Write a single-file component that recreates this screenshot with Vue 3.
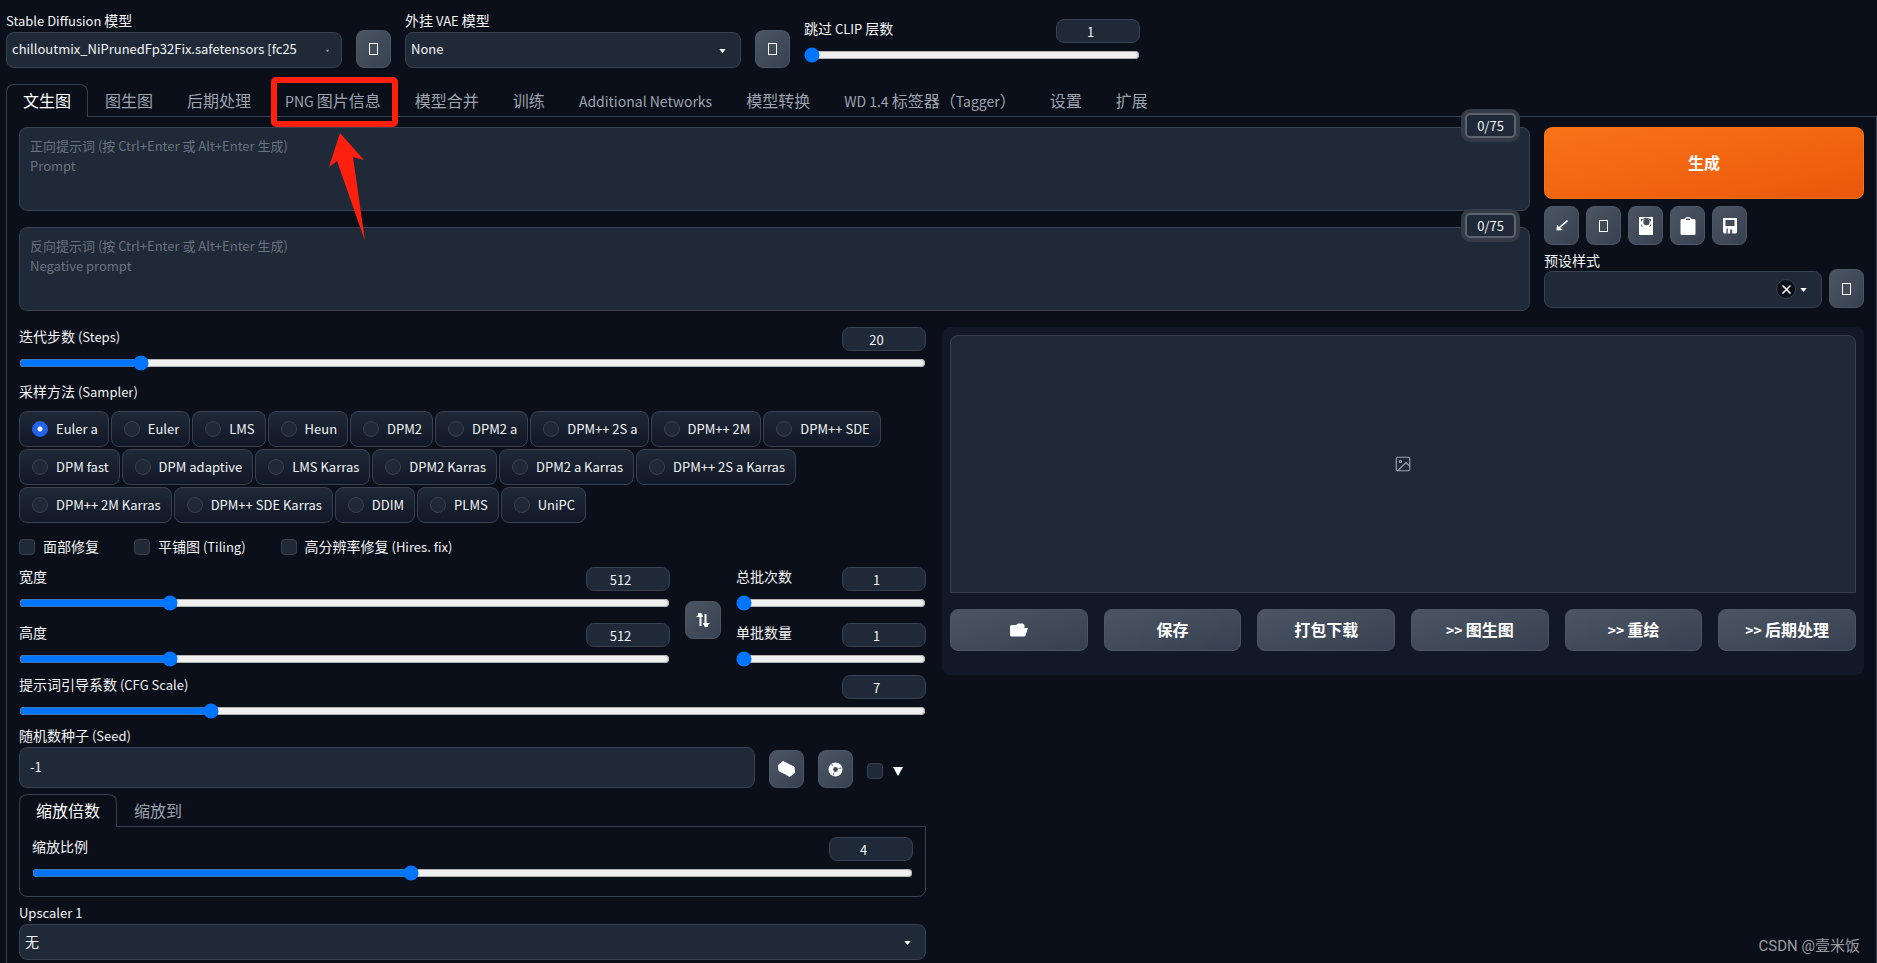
<script setup>
import { h, ref } from 'vue'

// Sets Latin runs a step smaller than the Chinese text beside them.
const Mixed = (props) =>
  props.text.split(/([\x20-\x7e]+)/).filter(Boolean).map((part) =>
    /^[\x20-\x7e]/.test(part) ? h('span', { class: 'latin' }, part) : part)
Mixed.props = ['text']

const tabs = ['文生图', '图生图', '后期处理', 'PNG 图片信息', '模型合并', '训练', 'Additional Networks', '模型转换', 'WD 1.4 标签器（Tagger）', '设置', '扩展']
const activeTab = ref('文生图')
const samplers = ['Euler a', 'Euler', 'LMS', 'Heun', 'DPM2', 'DPM2 a', 'DPM++ 2S a', 'DPM++ 2M', 'DPM++ SDE', 'DPM fast', 'DPM adaptive', 'LMS Karras', 'DPM2 Karras', 'DPM2 a Karras', 'DPM++ 2S a Karras', 'DPM++ 2M Karras', 'DPM++ SDE Karras', 'DDIM', 'PLMS', 'UniPC']
const sampler = ref('Euler a')
const toggles = ['面部修复', '平铺图 (Tiling)', '高分辨率修复 (Hires. fix)']
const prompts = [
  { id: 'prompt', hint: '正向提示词 (按 Ctrl+Enter 或 Alt+Enter 生成)\nPrompt' },
  { id: 'negative', hint: '反向提示词 (按 Ctrl+Enter 或 Alt+Enter 生成)\nNegative prompt' },
]
const clip = ref(1)
const steps = ref(20)
const width = ref(512)
const height = ref(512)
const batchCount = ref(1)
const batchSize = ref(1)
const cfg = ref(7)
const scale = ref(4)
const seed = ref('-1')
const outputs = ['保存', '打包下载', '>> 图生图', '>> 重绘', '>> 后期处理']
</script>

<template>
  <div class="app">
    <header class="topbar">
      <div class="field top-field">
        <label for="model"><Mixed text="Stable Diffusion 模型" /></label>
        <div class="select-box">
          <select id="model" class="latin"><option>chilloutmix_NiPrunedFp32Fix.safetensors [fc2511737a]</option></select>
          <svg class="caret tiny" viewBox="0 0 8 5"><path d="M2 1h4L4 4z" /></svg>
        </div>
      </div>
      <button class="tool" aria-label="refresh"><svg width="9" height="12"><rect class="line" x=".5" y=".5" width="8" height="11" /></svg></button>
      <div class="field top-field">
        <label for="vae"><Mixed text="外挂 VAE 模型" /></label>
        <div class="select-box">
          <select id="vae" class="latin"><option>None</option></select>
          <svg class="caret" viewBox="0 0 8 5"><path d="M0 0h8L4 5z" /></svg>
        </div>
      </div>
      <button class="tool" aria-label="refresh"><svg width="9" height="12"><rect class="line" x=".5" y=".5" width="8" height="11" /></svg></button>
      <div class="slider top-field">
        <div class="slider-head"><label for="clip"><Mixed text="跳过 CLIP 层数" /></label><input v-model="clip" type="number" aria-label="clip"></div>
        <input id="clip" v-model="clip" type="range" min="1" max="12">
      </div>
    </header>

    <nav class="tabs">
      <div v-for="t in tabs" :key="t" class="tab-wrap">
        <button class="tab" :class="{ active: t === activeTab }" @click="activeTab = t"><Mixed :text="t" /></button>
        <template v-if="t === 'PNG 图片信息'">
          <div class="mark"></div>
          <svg class="arrow" width="38" height="110" viewBox="0 0 38 110"><path d="M12 1 36 28 25 25 37 109 9 29 1 35z" fill="#ff1f0f" /></svg>
        </template>
      </div>
    </nav>

    <main class="panel">
      <section class="upper">
        <div class="prompts">
          <div v-for="p in prompts" :key="p.id" class="prompt">
            <textarea :id="p.id" :placeholder="p.hint" :aria-label="p.id"></textarea>
            <span class="counter">0/75</span>
          </div>
        </div>
        <div class="actions">
          <button class="generate">生成</button>
          <div class="tools">
            <button class="tool tall" aria-label="read"><svg width="12" height="11" viewBox="0 0 12 11"><path d="M11.500.5 3 8" stroke="#fff" stroke-width="1.600" /><path d="M1 4.500 .5 10.500 7 10 5 8.500 2.500 6.500z" fill="#fff" /></svg></button>
            <button class="tool tall" aria-label="clear"><svg width="9" height="12"><rect class="line" x=".5" y=".5" width="8" height="11" /></svg></button>
            <button class="tool tall" aria-label="networks"><svg width="14" height="18" viewBox="0 0 14 18"><path d="M0 0h14v18H0z" fill="#fff" /><path d="M2 2h2L2 5zM12 2h-2l2 3zM2 9V7l2 3zM12 9V7l-2 3z" fill="#434c5a" /><circle cx="7.500" cy="5" r="3.200" fill="#434c5a" /><path d="M4 2.500C5 .8 9 .8 11 2.500" stroke="#434c5a" fill="none" /></svg></button>
            <button class="tool tall" aria-label="paste"><svg width="16" height="18" viewBox="0 0 16 18"><path d="M2 2h2.500Q5 0 8 0t3.500 2H14q1.500 0 1.500 1.500v13Q15.500 18 14 18H2Q.5 18 .5 16.500v-13Q.5 2 2 2z" fill="#fff" /><path d="M6 2.300h4" stroke="#434c5a" stroke-width="1.400" /></svg></button>
            <button class="tool tall" aria-label="save"><svg width="16" height="16" viewBox="0 0 16 16"><path d="M1 0h14v14q0 1.500-2 1.500H2L1 14z" fill="#fff" /><path d="M3.500 2h9v6h-9zM4.500 10.500h1.300V16H4.500zM8.200 11.500h2V16h-2z" fill="#434c5a" /></svg></button>
          </div>
          <label class="style-label" for="styles">预设样式</label>
          <div class="style-row">
            <div class="select-box grow">
              <select id="styles" class="style-select"><option></option></select>
              <button class="clear" aria-label="clear styles"><svg width="9" height="9"><path class="line cross" d="M.5.5l8 8M8.500.5l-8 8" /></svg></button>
              <svg class="caret" viewBox="0 0 8 5"><path d="M0 0h8L4 5z" /></svg>
            </div>
            <button class="tool tall" aria-label="refresh"><svg width="9" height="12"><rect class="line" x=".5" y=".5" width="8" height="11" /></svg></button>
          </div>
        </div>
      </section>

      <section class="lower">
        <div class="settings">
          <div class="slider">
            <div class="slider-head"><label for="steps"><Mixed text="迭代步数 (Steps)" /></label><input v-model="steps" type="number" aria-label="steps"></div>
            <input id="steps" v-model="steps" type="range" min="1" max="150">
          </div>

          <fieldset class="samplers">
            <legend><Mixed text="采样方法 (Sampler)" /></legend>
            <div class="chips">
              <label v-for="s in samplers" :key="s" class="chip"><input v-model="sampler" type="radio" name="sampler" :value="s"><span class="latin">{{ s }}</span></label>
            </div>
          </fieldset>

          <div class="toggles">
            <label v-for="t in toggles" :key="t"><input type="checkbox"><span><Mixed :text="t" /></span></label>
          </div>

          <div class="size-row">
            <div class="stack grow">
              <div class="slider">
                <div class="slider-head"><label for="w">宽度</label><input v-model="width" type="number" aria-label="width"></div>
                <input id="w" v-model="width" type="range" min="64" max="2048" step="8">
              </div>
              <div class="slider">
                <div class="slider-head"><label for="h">高度</label><input v-model="height" type="number" aria-label="height"></div>
                <input id="h" v-model="height" type="range" min="64" max="2048" step="8">
              </div>
            </div>
            <button class="tool" aria-label="swap"><svg width="14" height="14" viewBox="0 0 14 14"><path d="M4.500 13V2M9.500 1v11" stroke="#fff" stroke-width="2" /><path d="M2 1h3.500M8.500 13H12" stroke="#fff" stroke-width="2" /><path d="M0 4 4.500 0l2.500 3v1zM14 10l-4.500 4L7 11v-1z" fill="#fff" /></svg></button>
            <div class="stack batch">
              <div class="slider">
                <div class="slider-head"><label for="bc">总批次数</label><input v-model="batchCount" type="number" aria-label="count"></div>
                <input id="bc" v-model="batchCount" type="range" min="1" max="100">
              </div>
              <div class="slider">
                <div class="slider-head"><label for="bs">单批数量</label><input v-model="batchSize" type="number" aria-label="size"></div>
                <input id="bs" v-model="batchSize" type="range" min="1" max="8">
              </div>
            </div>
          </div>

          <div class="slider cfg">
            <div class="slider-head"><label for="cfg"><Mixed text="提示词引导系数 (CFG Scale)" /></label><input v-model="cfg" type="number" aria-label="cfg"></div>
            <input id="cfg" v-model="cfg" type="range" min="1" max="30" step="0.5">
          </div>

          <label class="seed-label" for="seed"><Mixed text="随机数种子 (Seed)" /></label>
          <div class="seed-row">
            <input id="seed" v-model="seed" class="seed latin" type="text">
            <button class="tool" aria-label="random"><svg width="17" height="16" viewBox="0 0 17 16"><path d="M.5 4 5 .5l5 2.500L16 6l.5 6-5 3.500-4-2.500-6.500-3z" fill="#fff" stroke="#fff" stroke-linejoin="round" /></svg></button>
            <button class="tool" aria-label="reuse"><svg width="15" height="15" viewBox="0 0 15 15"><circle cx="7.500" cy="7.500" r="4.700" fill="none" stroke="#fff" stroke-width="4.600" /><path d="M3.500 2 5 4M13.500 6l-3 .5M5 13.500l1-3" stroke="#434c5a" stroke-width=".8" /><path d="M6 5l4 2.500L7 9.500z" fill="#434c5a" /></svg></button>
            <label class="extra"><input type="checkbox" aria-label="extra"><svg width="10" height="9"><path d="M0 0h10L5 9z" fill="#fff" /></svg></label>
          </div>

          <div class="tabs inner">
            <button class="tab active">缩放倍数</button>
            <button class="tab">缩放到</button>
          </div>
          <div class="scale-panel">
            <div class="slider">
              <div class="slider-head"><label for="scale">缩放比例</label><input v-model="scale" type="number" aria-label="scale"></div>
              <input id="scale" v-model="scale" type="range" min="1" max="8" step="0.05">
            </div>
          </div>

          <div class="field upscaler">
            <label for="up"><Mixed text="Upscaler 1" /></label>
            <div class="select-box">
              <select id="up"><option>无</option></select>
              <svg class="caret" viewBox="0 0 8 5"><path d="M0 0h8L4 5z" /></svg>
            </div>
          </div>
        </div>

        <div class="results">
          <div class="preview">
            <svg width="18" height="18" viewBox="0 0 24 24" fill="none" stroke="#9ca3af" stroke-width="1.500" stroke-linecap="round" stroke-linejoin="round"><rect x="3" y="3" width="18" height="18" rx="2" /><circle cx="8.500" cy="8.500" r="1.500" /><path d="m21 15-5-5L5 21" /></svg>
          </div>
          <div class="outputs">
            <button class="out" aria-label="folder"><svg width="18" height="14" viewBox="0 0 18 14"><path d="M0 3.500 1 2h5l2-1.500h5L14.500 2v3H18l-2.500 7.500Q15 13.500 14 13.500H1.500Q0 13.500 0 12z" fill="#fff" /><path d="M3 5h11" stroke="#d5d8dc" stroke-width=".7" /></svg></button>
            <button v-for="o in outputs" :key="o" class="out"><span><Mixed :text="o" /></span></button>
          </div>
        </div>
      </section>
    </main>
    <div class="watermark">CSDN @壹米饭</div>
  </div>
</template>

<style>
html, body { background: #0b0f19; }
.latin { font-size: 13px; line-height: 1; }
.tab .latin, .out .latin { font-size: 14px; }
</style>

<style scoped>
.app { position: relative; display: flex; flex-direction: column; min-height: 100vh; box-sizing: border-box; padding: 11px 0 0 6px; background: #0b0f19; color: #f3f4f6; font: 14px/20px "Noto Sans CJK SC", sans-serif; }
.app *, .app *::before { box-sizing: border-box; }
button, input, select, textarea { margin: 0; font-family: inherit; font-weight: inherit; line-height: inherit; color: inherit; }
button, select { font-size: 14px; }
select.latin, .seed.latin { font-size: 13px; }
button { cursor: pointer; padding: 0; }
svg { display: block; flex: none; }
label, legend { white-space: nowrap; }
.slider-head label, .field label, .seed-label, .style-label, legend { height: 20px; line-height: 18px; }
.line { fill: none; stroke: #fff; }
.cross { stroke-width: 1.5; }
.grow { flex: 1; min-width: 0; }

.topbar { display: flex; align-items: flex-end; gap: 14px; }
.top-field { width: 336px; }
.topbar .slider { align-self: flex-start; margin-top: 8px; }
.field { display: flex; flex-direction: column; gap: 1px; }
.select-box { position: relative; display: flex; }
select { appearance: none; width: 100%; height: 36px; padding: 0 44px 3px 5px; border: 1px solid #374151; border-radius: 8px; background: #1f2937; }
.caret { position: absolute; right: 15px; top: 17px; width: 7px; height: 4px; fill: #fff; pointer-events: none; }
.tiny { right: 11px; fill: #9ca3af; }
.tool { display: flex; flex: none; align-items: center; justify-content: center; width: 35px; height: 38px; border: 1px solid #4b5563; border-radius: 8px; background: linear-gradient(to bottom right, #4b5563, #374151); }
.tall { height: 39px; }

.slider { display: flex; flex-direction: column; gap: 4px; }
.slider-head { display: flex; justify-content: space-between; }
.slider-head input { width: 84px; height: 24px; padding: 0 8px; border: 1px solid #374151; border-radius: 8px; background: #1f2937; font-size: 13px; text-align: center; }
input[type="range"] { width: 100%; height: 16px; }

.tabs { display: flex; margin-top: 16px; }
.tab-wrap { position: relative; }
.tab { display: block; height: 33px; padding: 0 16px 2px; border: 1px solid transparent; border-bottom: 0; border-radius: 8px 8px 0 0; background: none; color: #9ca3af; font-size: 16px; line-height: 30px; white-space: nowrap; }
.tab.active { position: relative; z-index: 1; border-color: #374151; background: #0b0f19; color: #fff; }
.mark { position: absolute; z-index: 3; left: 3px; top: -7px; width: 127px; height: 50px; border: 6px solid #ff1f0f; border-radius: 5px; pointer-events: none; }
.arrow { position: absolute; z-index: 3; left: 60px; top: 48px; pointer-events: none; }

.panel { flex: 1; margin-top: -1px; padding: 10px 12px 1px; border: 1px solid #374151; border-bottom: 0; }
.upper { display: flex; gap: 14px; }
.prompts { flex: 1; display: flex; flex-direction: column; gap: 16px; }
.prompt { position: relative; display: flex; }
textarea { width: 100%; height: 84px; padding: 8px 10px; border: 1px solid #374151; border-radius: 8px; background: #1f2937; font-size: 13px; resize: none; }
textarea::placeholder { color: #6b7280; opacity: 1; }
.counter { position: absolute; right: 14px; top: -14px; width: 51px; height: 25px; border: 2px solid #5c636c; border-radius: 5px; background: #1f2937; box-shadow: 0 0 0 4px #343b47; font-size: 13px; line-height: 21px; text-align: center; }
.actions { width: 320px; display: flex; flex-direction: column; }
.generate { height: 72px; padding-bottom: 2px; border: 1px solid #f97316; border-radius: 8px; background: linear-gradient(to bottom right, #f97316, #ea580c); color: #fff; font-size: 16px; font-weight: 600; }
.tools { display: flex; gap: 7px; margin-top: 7px; }
.style-label { margin-top: 6px; }
.style-row { display: flex; align-items: flex-end; gap: 7px; margin-top: -2px; }
.style-select { height: 37px; }
.clear { position: absolute; right: 26px; top: 8px; display: flex; align-items: center; justify-content: center; width: 20px; height: 20px; border: 1px solid #374151; border-radius: 50%; background: #0b0f19; }

.lower { display: grid; grid-template-columns: 907fr 922fr; gap: 16px; align-items: start; margin-top: 16px; }
.settings { min-width: 0; }
.samplers { margin: 11px 0 0; padding: 0; border: 0; }
legend { padding: 0; margin-bottom: 9px; }
.chips { display: flex; flex-wrap: wrap; gap: 2px; }
.chip { display: flex; align-items: center; gap: 8px; height: 36px; padding: 0 10px 1px 12px; border: 1px solid #374151; border-radius: 8px; background: linear-gradient(to bottom, #1f2937, #111827); }
input[type="radio"], input[type="checkbox"] { appearance: none; flex: none; width: 16px; height: 16px; border: 1px solid #374151; background: #1f2937; }
input[type="checkbox"] { border-radius: 4px; }
input[type="radio"] { border-radius: 50%; }
input[type="radio"]:checked { border-color: #2563eb; background: radial-gradient(circle, #fff 2px, #2563eb 3px); }
.toggles { display: flex; gap: 35px; margin-top: 14px; }
.toggles label { display: flex; align-items: center; gap: 8px; height: 20px; }
.toggles span { height: 20px; line-height: 18px; }
.size-row { display: flex; align-items: center; gap: 15px; margin-top: 10px; }
.stack { display: flex; flex-direction: column; gap: 12px; }
.batch { width: 190px; }
.size-row .tool { width: 36px; margin-top: 5px; }
.cfg { margin-top: 8px; }
.seed-label { display: block; margin-top: 7px; }
.seed-row { display: flex; align-items: flex-end; gap: 14px; margin-top: 1px; }
.seed { flex: 1; height: 41px; padding: 0 10px 2px; border: 1px solid #374151; border-radius: 8px; background: #1f2937; }
.extra { display: flex; align-items: center; gap: 10px; width: 59px; height: 34px; }
.inner { margin-top: 6px; }
.scale-panel { margin-top: -1px; padding: 10px 12px 15px; border: 1px solid #374151; border-radius: 0 0 8px 8px; }
.upscaler { margin-top: 6px; }

.results { padding: 8px 8px 24px; border-radius: 8px; background: #111827; }
.preview { display: flex; align-items: center; justify-content: center; height: 258px; border: 1px solid #374151; border-radius: 8px 8px 0 0; background: #1f2937; }
.outputs { display: grid; grid-template-columns: repeat(6, 1fr); gap: 16px; margin-top: 16px; }
.out { display: flex; align-items: center; justify-content: center; height: 42px; border: 1px solid #4b5563; border-radius: 8px; background: linear-gradient(to bottom right, #4b5563, #374151); color: #fff; font-size: 16px; font-weight: 600; white-space: nowrap; }
.out > span { padding-bottom: 2px; }
.watermark { position: absolute; right: 17px; bottom: 6px; color: #9a9c9f; font: 15px/22px Roboto, "Noto Sans CJK SC", sans-serif; }
</style>
